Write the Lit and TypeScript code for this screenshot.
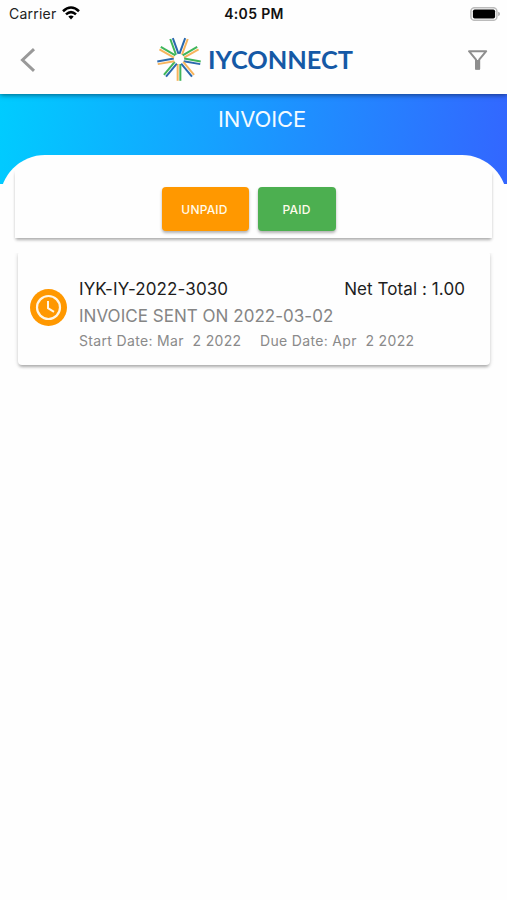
import { LitElement, html, css, svg } from "lit";
import { customElement } from "lit/decorators.js";

const BLUE = "#2a68ad";
const GREEN = "#3fb55a";
const ORANGE = "#f7b45c";

// Nine rays, 40 degrees apart, clockwise from the bottom one; each has two parallel stripes.
const RAYS: [string, string][] = [
  [GREEN, ORANGE],
  [BLUE, GREEN],
  [ORANGE, BLUE],
  [ORANGE, GREEN],
  [GREEN, BLUE],
  [BLUE, ORANGE],
  [GREEN, ORANGE],
  [GREEN, BLUE],
  [ORANGE, BLUE],
];

@customElement("iy-logo")
class IyLogo extends LitElement {
  static styles = css`
    :host { display: flex; align-items: center; gap: 5px; }
    .burst { width: 44px; height: 44px; display: block; }
    .name { width: 150px; height: 34px; display: block; fill: #1559a6; }
    .word { font: 700 24px "Lato", sans-serif; }
  `;
  render() {
    return html`
      <svg class="burst" viewBox="-22 -22 44 44">
        ${RAYS.map(
          ([a, b], i) => svg`<g transform="rotate(${i * 40})" fill="none" stroke-width="2">
            <path d="M1.35 5V21.8" stroke=${a}/><path d="M-1.35 5V21.8" stroke=${b}/>
          </g>`,
        )}
      </svg>
      <svg class="name" viewBox="0 0 150 34">
        <text class="word" x="2" y="26.7" textLength="145" lengthAdjust="spacingAndGlyphs">IYCONNECT</text>
      </svg>
    `;
  }
}

@customElement("app-root")
class AppRoot extends LitElement {
  static styles = css`
    :host { display: block; height: 900px; overflow: hidden; background: #fefefe; font-family: "Inter", sans-serif; color: #222; }
    * { box-sizing: border-box; }
    svg { display: block; }
    .top { position: relative; height: 94px; background: #fefefe; box-shadow: 0 1px 5px rgba(0, 0, 0, .5); }
    .status { display: grid; grid-template-columns: 1fr auto 1fr; height: 27px; align-items: center; padding: 0 7px 0 8px; font-size: 14px; }
    .carrier { display: flex; align-items: center; gap: 6px; letter-spacing: .22px; padding-left: 1px; }
    .wifi { margin-top: -2px; }
    .time { font-weight: 600; color: #111; letter-spacing: .35px; }
    .battery { justify-self: end; }
    .nav { display: flex; justify-content: space-between; align-items: center; height: 65px; padding: 0 18px 0 20px; }
    .nav iy-logo { margin: -2px 0 0 9px; }
    .banner { height: 90px; background: linear-gradient(97deg, #00ccff, #3366ff); text-align: center; color: #f2faff; font-size: 22px; line-height: 50px; padding-left: 17px; letter-spacing: -.1px; }
    .panel { position: relative; margin-top: -29px; height: 745px; border-radius: 45px 45px 0 0; background: #fefefe; padding: 16px 15px 0; }
    .filters { height: 67px; background: #fefefe; box-shadow: 0 3px 3px -1px rgba(0, 0, 0, .26), 0 1px 3px rgba(0, 0, 0, .12); clip-path: inset(0 -8px -10px); display: flex; justify-content: center; gap: 9px; padding: 16px 10px 0 0; }
    .btn { height: 44px; border: 0; border-radius: 4px; color: #fffbea; font: 500 12px "Inter", sans-serif; letter-spacing: .2px; padding: 0; box-shadow: 0 2px 3px rgba(0, 0, 0, .3); }
    .unpaid { width: 87px; background: #ff9800; padding-right: 1px; }
    .paid { width: 78px; background: #4caf50; }
    .card { margin: 13px 2px 0 3px; height: 114px; border-radius: 4px; background: #fefefe; box-shadow: 0 3px 3px -1px rgba(0, 0, 0, .24), 0 1px 4px rgba(0, 0, 0, .16); clip-path: inset(2px -8px -10px); display: flex; gap: 12px; padding: 25px 25px 0 12px; }
    .clock { margin-top: 13px; flex: none; }
    .info { flex: 1; white-space: pre; }
    .row { display: flex; justify-content: space-between; font-size: 17px; line-height: 26px; color: #1d1d1d; }
    .sent { font-size: 17px; line-height: 28px; color: #858585; letter-spacing: .03px; }
    .dates { display: flex; gap: 18.5px; font-size: 14px; line-height: 21px; color: #8a8a8a; letter-spacing: .34px; }
    .number { letter-spacing: .11px; }
    .total { letter-spacing: .08px; }
  `;
  render() {
    return html`
      <header class="top">
        <div class="status">
          <div class="carrier">Carrier
            <svg class="wifi" width="18" height="14" viewBox="0 0 18 14" fill="none" stroke="#000" stroke-width="2.6">
              <path d="M1 5.2Q9-2.2 17 5.2"/><path d="M4 8.4Q9 3.9 14 8.4"/><path d="M6.3 10.6Q9 8.3 11.7 10.6L9 13.5Z" fill="#000" stroke="none"/>
            </svg>
          </div>
          <div class="time">4:05 PM</div>
          <svg class="battery" width="30" height="14" viewBox="0 0 30 14">
            <rect x=".9" y=".7" width="26" height="12.6" rx="3.6" fill="#fff" stroke="#bbb" stroke-width="1.5"/>
            <rect x="2.9" y="2.5" width="22.2" height="9" rx="1.8" fill="#000"/>
            <path d="M28.2 4.8Q30 5.4 30 7T28.2 9.2Z" fill="#aaa"/>
          </svg>
        </div>
        <nav class="nav">
          <svg width="16" height="24" viewBox="0 0 16 24" fill="none" stroke="#999" stroke-width="3"><path d="M14 1.2L2.5 12L14 22.8"/></svg>
          <iy-logo></iy-logo>
          <svg width="22" height="22" viewBox="0 0 22 22" fill="none" stroke="#8e8e8e" stroke-width="2"><path d="M2 2.2H19.2L12.2 10.7V19.8H9V10.7Z" stroke-linejoin="round"/><path d="M10.6 11V20.5" stroke-width="4.6"/></svg>
        </nav>
      </header>
      <div class="banner">INVOICE</div>
      <main class="panel">
        <section class="filters">
          <button class="btn unpaid">UNPAID</button>
          <button class="btn paid">PAID</button>
        </section>
        <article class="card">
          <svg class="clock" width="37" height="37" viewBox="0 0 37 37" fill="none" stroke="#fff6e4" stroke-width="2.2">
            <circle cx="18.5" cy="18.5" r="18.5" fill="#ff9800" stroke="none"/>
            <circle cx="18.5" cy="18.5" r="11.5"/><path d="M18 12V19.2L24 22.8" stroke-width="2"/>
          </svg>
          <div class="info"><div class="row"><span class="number">IYK-IY-2022-3030</span><span class="total">Net Total : 1.00</span></div><div class="sent">INVOICE SENT ON 2022-03-02</div><div class="dates"><span>Start Date: Mar  2 2022</span><span>Due Date: Apr  2 2022</span></div></div>
        </article>
      </main>
    `;
  }
}
